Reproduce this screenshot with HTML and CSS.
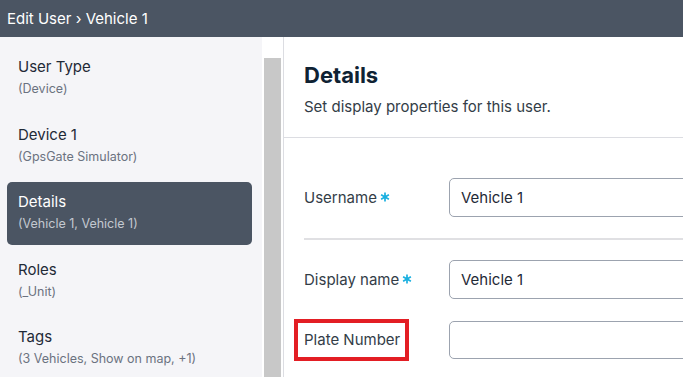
FILE: index.html
```html
<!DOCTYPE html>
<html lang="en">
<head>
<meta charset="utf-8">
<title>Edit User › Vehicle 1</title>
<link rel="stylesheet" href="styles.css">
</head>
<body>
<header class="topbar">Edit User › Vehicle 1</header>
<div class="main">
  <nav class="sidebar">
    <div class="nav-item">
      <div class="nav-title">User Type</div>
      <div class="nav-sub">(Device)</div>
    </div>
    <div class="nav-item">
      <div class="nav-title">Device 1</div>
      <div class="nav-sub">(GpsGate Simulator)</div>
    </div>
    <div class="nav-item active">
      <div class="nav-title">Details</div>
      <div class="nav-sub">(Vehicle 1, Vehicle 1)</div>
    </div>
    <div class="nav-item">
      <div class="nav-title">Roles</div>
      <div class="nav-sub">(_Unit)</div>
    </div>
    <div class="nav-item">
      <div class="nav-title">Tags</div>
      <div class="nav-sub">(3 Vehicles, Show on map, +1)</div>
    </div>
  </nav>
  <div class="scrolltrack"><div class="thumb"></div></div>
  <section class="content">
    <div class="intro">
      <h1 class="heading">Details</h1>
      <p class="desc">Set display properties for this user.</p>
    </div>
    <div class="form">
      <div class="row">
        <label class="label">Username<svg class="req" viewBox="0 0 10 10" width="10" height="10"><path d="M5 0.5V9.5M1.1 2.75L8.9 7.25M1.1 7.25L8.9 2.75"/></svg></label>
        <div class="input">Vehicle 1</div>
      </div>
      <div class="divider"></div>
      <div class="row">
        <label class="label">Display name<svg class="req" viewBox="0 0 10 10" width="10" height="10"><path d="M5 0.5V9.5M1.1 2.75L8.9 7.25M1.1 7.25L8.9 2.75"/></svg></label>
        <div class="input">Vehicle 1</div>
      </div>
      <div class="row row-plain">
        <label class="label"><span class="highlight">Plate Number</span></label>
        <div class="input"></div>
      </div>
    </div>
  </section>
</div>
</body>
</html>
```
FILE: styles.css
```css
* { box-sizing: border-box; }
html, body {
  margin: 0;
  padding: 0;
  width: 683px;
  height: 377px;
  overflow: hidden;
  background: #ffffff;
  font-family: Inter, "Noto Sans", sans-serif;
}
.topbar {
  height: 37px;
  background: #4b5563;
  color: #ffffff;
  font-size: 15px;
  line-height: 37px;
  padding-left: 7px;
}
.main {
  display: flex;
  height: 340px;
  overflow: hidden;
}
.sidebar {
  width: 262px;
  flex: none;
  background: #f5f5f8;
  padding: 10px 10px 0 7px;
  display: flex;
  flex-direction: column;
  gap: 4.5px;
}
.nav-item {
  height: 63px;
  flex: none;
  padding: 9px 11px 0;
  border-radius: 5px;
}
.nav-title {
  font-size: 15px;
  line-height: 22px;
  color: #1f2a37;
}
.nav-sub {
  margin-top: 2px;
  font-size: 12.5px;
  line-height: 18px;
  color: #6b7280;
}
.nav-item.active { background: #4b5563; }
.nav-item.active .nav-title { color: #ffffff; }
.nav-item.active .nav-sub { color: #c3c8d0; }
.scrolltrack {
  width: 22px;
  flex: none;
  background: #ffffff;
  padding: 21px 2px 0 2px;
  border-right: 1px solid #dcdde2;
}
.thumb {
  width: 17px;
  height: 400px;
  background: #c8c8c8;
}
.content {
  flex: 1;
  min-width: 0;
  overflow: hidden;
}
.intro {
  padding: 24px 20px 20px;
  border-bottom: 1px solid #dcdde2;
}
.heading {
  margin: 0;
  font-size: 22px;
  line-height: 28px;
  font-weight: 700;
  color: #0f2233;
}
.desc {
  margin: 8px 0 0;
  font-size: 15px;
  line-height: 20px;
  color: #333d47;
}
.form {
  padding: 40px 0 0 20px;
}
.row {
  display: flex;
  align-items: center;
  height: 39px;
}
.row-plain { margin-top: 22px; height: 38px; }
.label {
  width: 145px;
  flex: none;
  font-size: 15px;
  line-height: 20px;
  color: #333d47;
  display: flex;
  align-items: center;
}
.req {
  margin-left: 3px;
  margin-top: -1px;
  fill: none;
  stroke: #1ab0e0;
  stroke-width: 1.7;
}
.highlight {
  position: relative;
  display: inline-block;
}
.highlight::after {
  content: "";
  position: absolute;
  top: -11px;
  bottom: -11px;
  left: -10px;
  right: -9px;
  border: 4.5px solid #e31e24;
}
.input {
  width: 300px;
  flex: none;
  height: 100%;
  border: 1px solid #9ca3af;
  border-radius: 5px;
  padding-left: 11px;
  font-size: 15px;
  line-height: 37px;
  color: #1f2a37;
}
.divider {
  height: 2px;
  background: #e0e0e3;
  margin: 21px 0 20px;
}
```
